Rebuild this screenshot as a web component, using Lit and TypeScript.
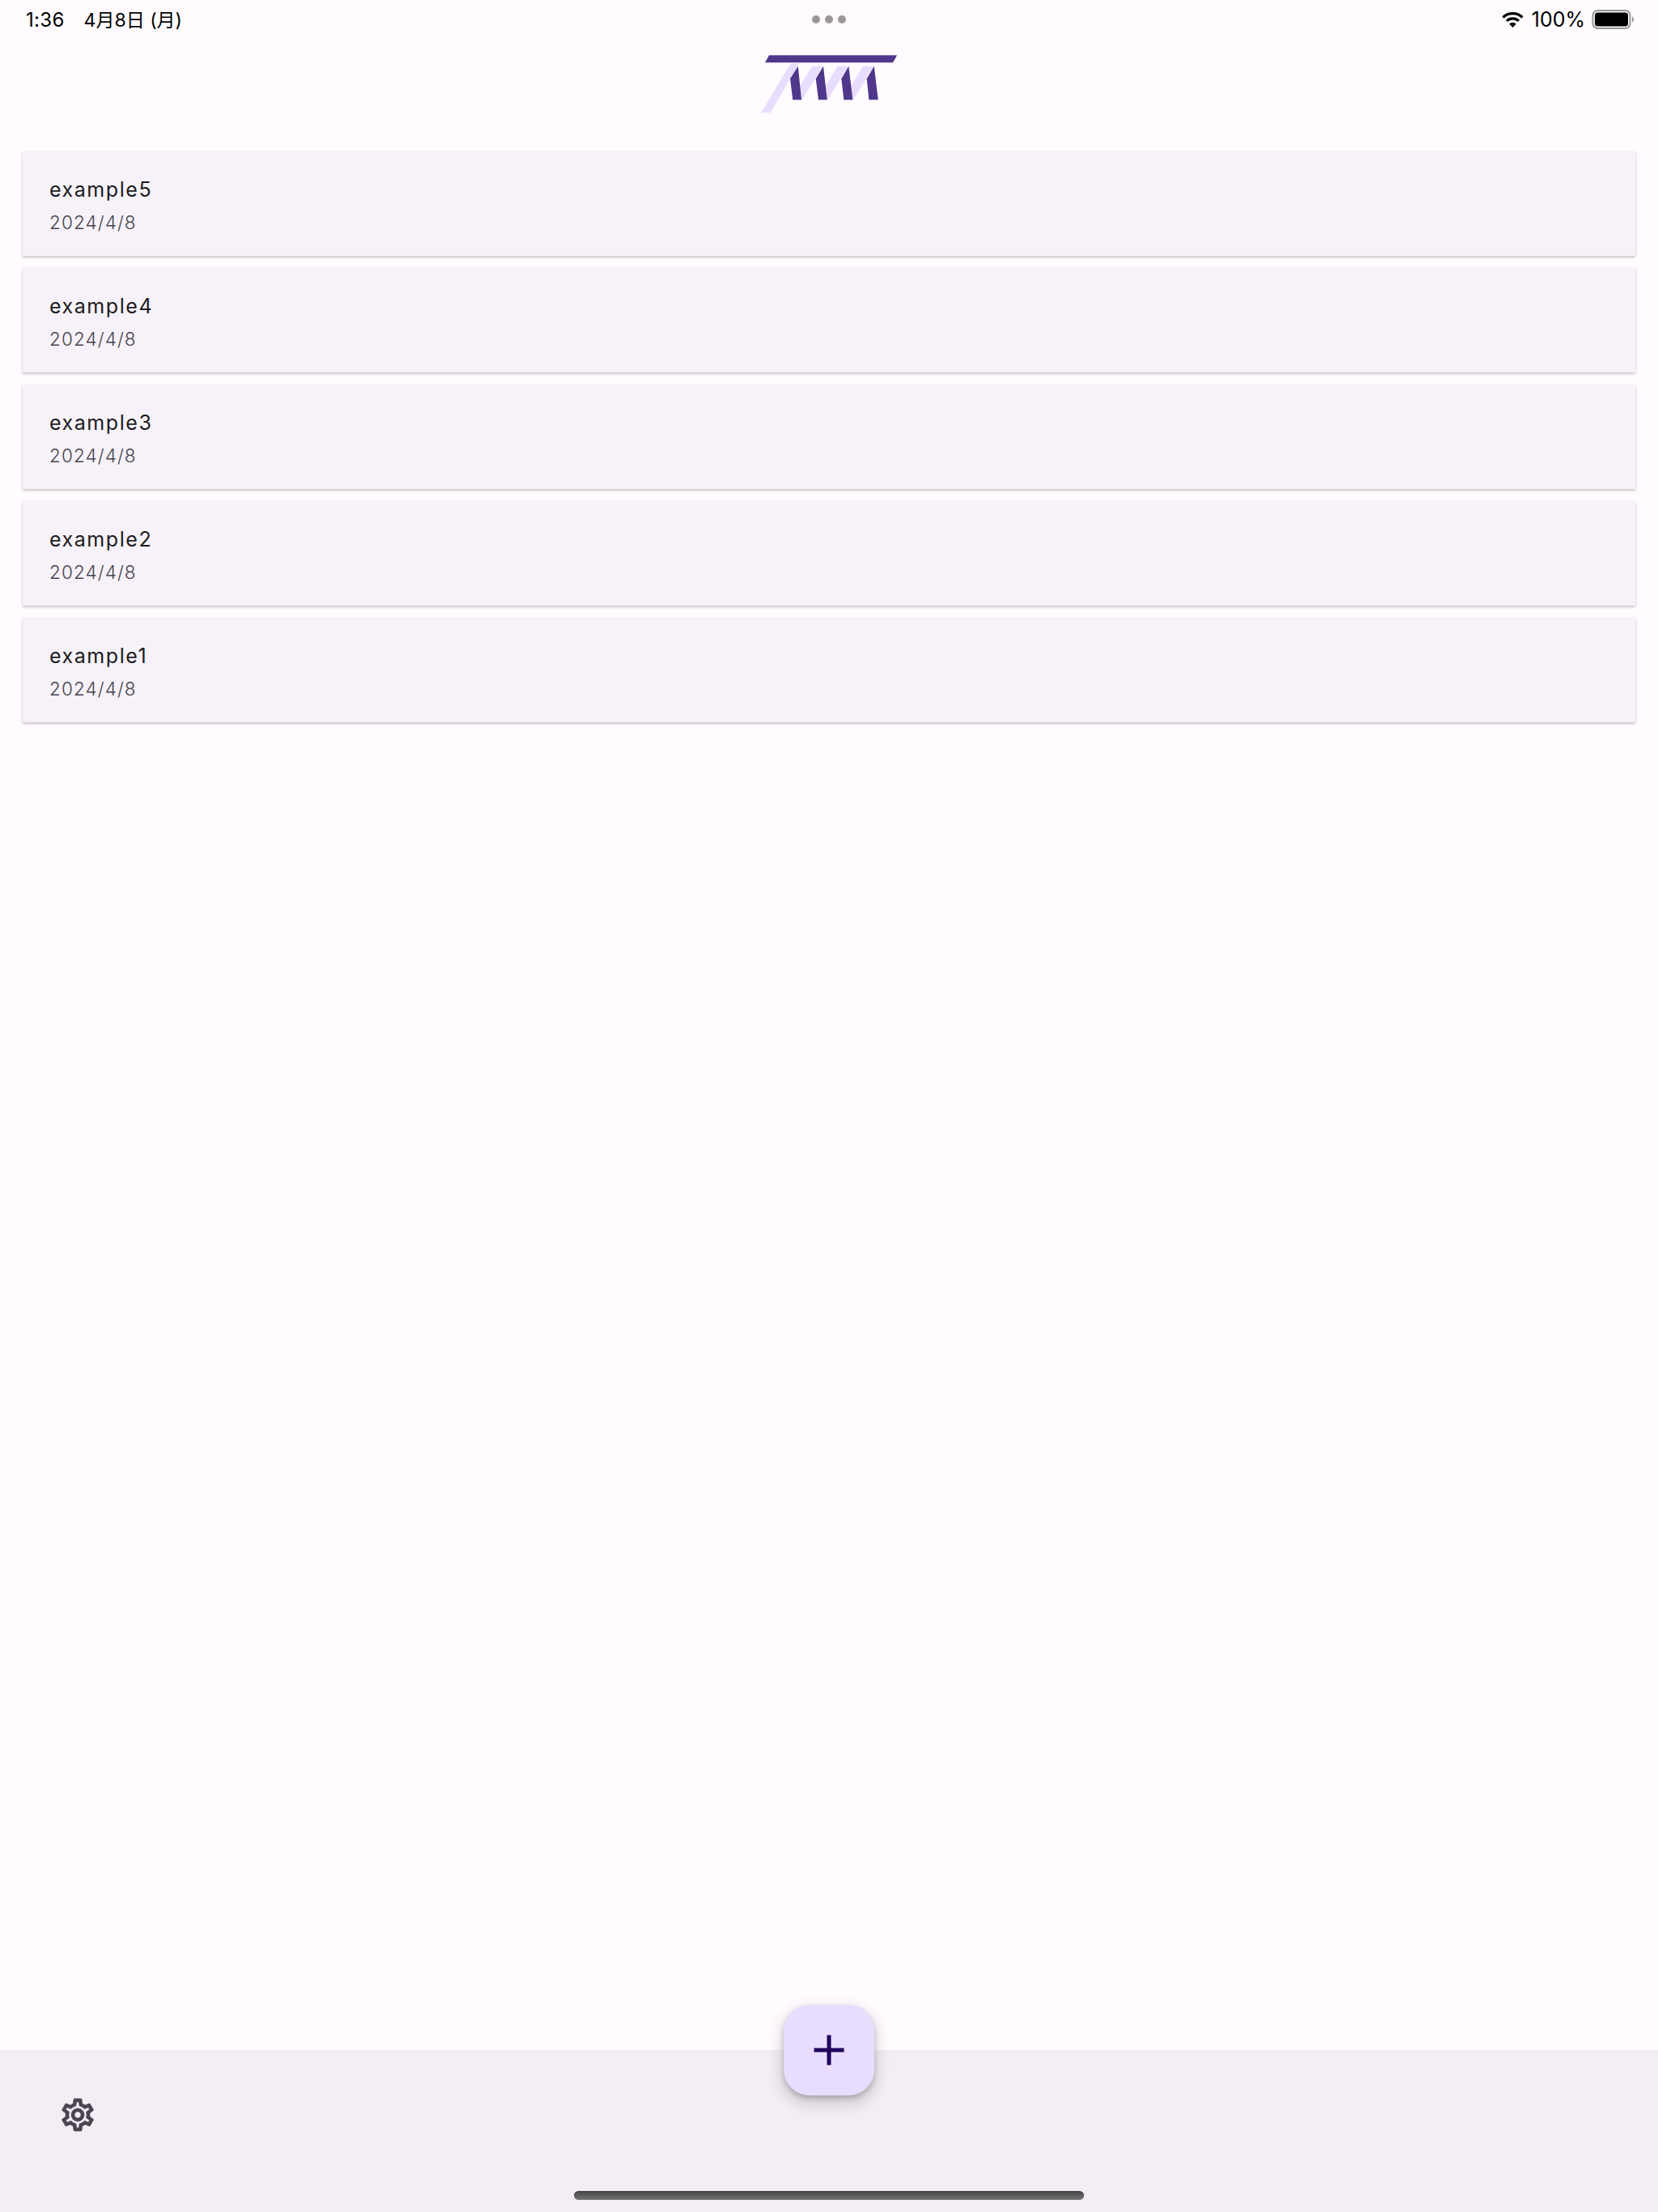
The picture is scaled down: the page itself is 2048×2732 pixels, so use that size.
import { LitElement, html, css } from "lit";
import { customElement } from "lit/decorators.js";

const items = ["example5", "example4", "example3", "example2", "example1"];

@customElement("app-root")
export class AppRoot extends LitElement {
  static styles = css`
    :host { display: block; }
    .page {
      width: 2048px; height: 2732px; background: #fffbfe; display: flex; flex-direction: column;
      position: relative; overflow: hidden; font-family: Inter, "Noto Sans CJK JP", sans-serif;
    }
    .status {
      height: 48px; display: flex; align-items: center; justify-content: space-between;
      padding: 0 28px 0 32px; color: #000; position: relative; flex: none;
    }
    .time { display: flex; align-items: baseline; gap: 24px; font-size: 24px; letter-spacing: .3px; padding-bottom: 2px; }
    .day { font-size: 23px; letter-spacing: 0; }
    .dots { position: absolute; left: 1003px; top: 19px; display: flex; gap: 6px; }
    .dots i { width: 10px; height: 10px; border-radius: 50%; background: #9b9799; display: block; }
    .right { display: flex; align-items: center; gap: 8px; font-size: 25px; }
    .wifi { margin-right: 2px; }
    .logo { height: 140px; flex: none; }
    .logo svg { display: block; margin-left: 935px; margin-top: 12px; }
    .list { display: flex; flex-direction: column; gap: 15px; padding: 0 28px; flex: none; margin-top: -1px; }
    .card {
      height: 129px; background: #f7f2f9; box-shadow: 0 2px 3px rgba(0,0,0,.18), 0 1px 4px rgba(0,0,0,.07);
      padding: 30px 33px 0; box-sizing: border-box;
    }
    .title { font-size: 25px; line-height: 34px; letter-spacing: 1.55px; color: #1d1b20; }
    .date { font-size: 22.5px; line-height: 30px; margin-top: 9px; letter-spacing: 1.1px; color: #49454f; font-weight: 300; }
    .spacer { flex: 1; }
    .bar { height: 200px; background: #f3eef5; flex: none; display: flex; padding: 56px 0 0 72px; box-sizing: border-box; }
    .gear { display: block; }
    .fab {
      position: absolute; left: 968px; top: 2476px; width: 112px; height: 112px; border-radius: 32px;
      background: #e9ddff; box-shadow: 0 8px 18px 4px rgba(0,0,0,.14), 0 4px 6px rgba(0,0,0,.18);
      display: flex; align-items: center; justify-content: center;
    }
    .home {
      position: absolute; left: 709px; top: 2706px; width: 630px; height: 11px; border-radius: 6px;
      background: linear-gradient(#454345, #757376);
    }
  `;

  render() {
    return html`<div class="page">
      <div class="status">
        <div class="time"><span>1:36</span><span class="day">4月8日 (月)</span></div>
        <div class="dots"><i></i><i></i><i></i></div>
        <div class="right">
          <svg class="wifi" width="27" height="20" viewBox="0 0 27 20">
            <path d="M1.500 7.500A17 17 0 0 1 25.500 7.500M6 11.800A11 11 0 0 1 21 11.800" fill="none" stroke="#000" stroke-width="3.200"/>
            <path d="M13.500 20L9.200 15.600A6 6 0 0 1 17.800 15.600z" fill="#000"/>
          </svg>
          <span>100%</span>
          <svg width="54" height="26" viewBox="0 0 54 26"><rect x="1.500" y="2" width="46" height="22" rx="6" fill="none" stroke="#98959a" stroke-width="2"/><rect x="4" y="4.500" width="41" height="17" rx="3.500" fill="#000"/><path d="M50 9.500c1.500.5 2 2 2 3.500s-.5 3-2 3.500z" fill="#98959a"/></svg>
        </div>
      </div>
      <div class="logo">
        <svg width="180" height="85" viewBox="0 0 180 85">
          <g fill="#e9ddff">
            <path d="M41.700 18H52L16.700 79.300H5z"/>
            <path d="M68 21.700H81L56 63.300H43z"/>
            <path d="M99.500 21.700H112.500L87.500 63.300H74.500z"/>
            <path d="M131 21.700H144L119 63.300H106z"/>
          </g>
          <g fill="#4f378b">
            <path d="M15 8.300H173L168 17.300H10z"/>
            <path d="M50.700 21.700L41 37.300L44.300 63.300H55z"/>
            <path d="M82 21.700L72.700 37.300L76 63.300H86.700z"/>
            <path d="M113.300 21.700L104.300 37.300L107.300 63.300H118.300z"/>
            <path d="M144.700 21.700L135.700 37.300L138.300 63.300H149.700z"/>
          </g>
        </svg>
      </div>
      <div class="list">
        ${items.map((t) => html`<div class="card"><div class="title">${t}</div><div class="date">2024/4/8</div></div>`)}
      </div>
      <div class="spacer"></div>
      <div class="bar">
        <svg class="gear" width="48" height="48" viewBox="0 0 24 24" fill="#49454f" stroke="#49454f" stroke-width=".3"><path d="M19.430 12.980c.04-.32.07-.64.07-.98s-.03-.66-.07-.98l2.110-1.650c.19-.15.24-.42.12-.64l-2-3.460c-.12-.22-.39-.3-.61-.22l-2.490 1c-.52-.4-1.080-.73-1.690-.98l-.38-2.650C14.460 2.180 14.250 2 14 2h-4c-.25 0-.46.18-.49.42l-.38 2.650c-.61.25-1.170.59-1.690.98l-2.490-1c-.23-.09-.49 0-.61.22l-2 3.460c-.13.22-.07.49.12.64l2.110 1.650c-.04.32-.07.65-.07.98s.03.66.07.98l-2.110 1.650c-.19.15-.24.42-.12.64l2 3.460c.12.22.39.3.61.22l2.490-1c.52.4 1.080.73 1.690.98l.38 2.650c.03.24.24.42.49.42h4c.25 0 .46-.18.49-.42l.38-2.650c.61-.25 1.170-.59 1.690-.98l2.490 1c.23.09.49 0 .61-.22l2-3.460c.12-.22.07-.49-.12-.64l-2.110-1.650zM17.450 11.270c.04.31.05.52.05.73s-.02.43-.05.73l-.14 1.130.89.7 1.080.84-.7 1.210-1.270-.51-1.040-.42-.9.680c-.43.32-.84.56-1.250.73l-1.060.43-.16 1.130-.2 1.350h-1.400l-.19-1.350-.16-1.130-1.060-.43c-.43-.18-.83-.41-1.230-.71l-.91-.7-1.060.43-1.270.51-.7-1.210 1.080-.84.89-.7-.14-1.130c-.03-.31-.05-.54-.05-.74s.02-.43.05-.73l.14-1.130-.89-.7-1.080-.84.7-1.210 1.270.51 1.040.42.9-.68c.43-.32.84-.56 1.250-.73l1.060-.43.16-1.130.2-1.350h1.390l.19 1.350.16 1.130 1.060.43c.43.18.83.41 1.230.71l.91.7 1.060-.43 1.270-.51.7 1.210-1.070.85-.89.7.14 1.130zM12 8c-2.210 0-4 1.790-4 4s1.790 4 4 4 4-1.790 4-4-1.790-4-4-4zm0 6c-1.100 0-2-.9-2-2s.9-2 2-2 2 .9 2 2-.9 2-2 2z"/></svg>
      </div>
      <div class="fab">
        <svg width="48" height="48" viewBox="0 0 48 48"><path d="M21.500 5.500h5v16h16v5h-16v16h-5v-16h-16v-5h16z" fill="#21005d"/></svg>
      </div>
      <div class="home"></div>
    </div>`;
  }
}
